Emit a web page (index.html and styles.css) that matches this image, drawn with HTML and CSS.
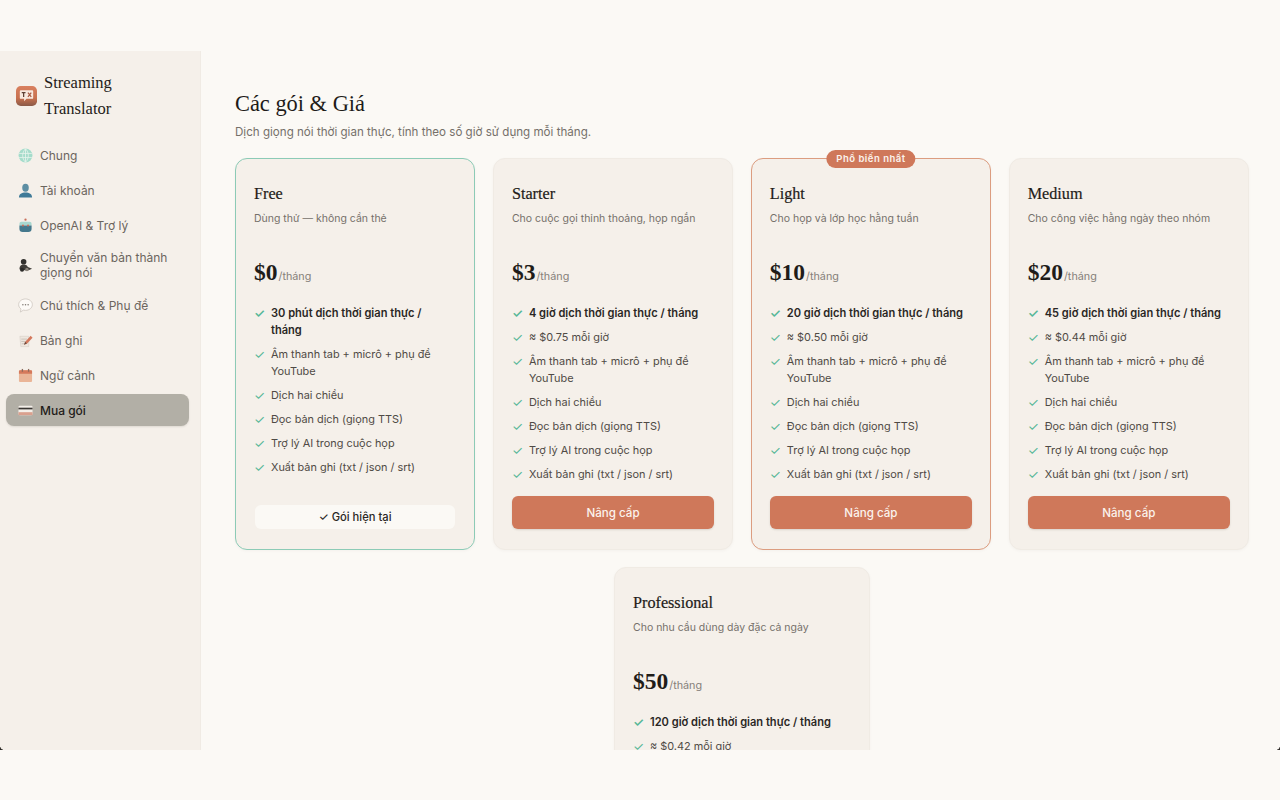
FILE: index.html
```html
<!DOCTYPE html>
<html lang="vi">
<head>
<meta charset="UTF-8" />
<title>Streaming Translator - Các gói & Giá</title>
<link rel="stylesheet" href="styles.css">
</head>
<body>
  <div class="app">
    <aside class="sidebar">
      <div class="brand">
        <svg class="brand-logo" viewBox="0 0 22 22" aria-hidden="true">
          <defs>
            <linearGradient id="logoBg" x1="0" y1="0" x2="0" y2="1">
              <stop offset="0" stop-color="#d9805f" />
              <stop offset="0.6" stop-color="#c8714f" />
              <stop offset="1" stop-color="#8a5a48" />
            </linearGradient>
          </defs>
          <rect width="22" height="21" y="0.5" rx="5" fill="url(#logoBg)" />
          <path d="M5 5h12a1 1 0 0 1 1 1v7a1 1 0 0 1-1 1h-6l-2.500 2.500V14H5a1 1 0 0 1-1-1V6a1 1 0 0 1 1-1z" fill="#f8e9df" />
          <path d="M6 7.500h4M8 7.500v4.500" stroke="#5d4034" stroke-width="1.300" fill="none" />
          <path d="M12.500 7.500l3.500 4.500M16 7.500l-3.500 4.500" stroke="#a85a43" stroke-width="1.300" fill="none" />
        </svg>
        <div class="brand-name">Streaming Translator</div>
      </div>
      <nav class="nav">
        <a class="nav-item">
          <svg class="nav-icon" viewBox="0 0 16 16"><circle cx="8" cy="8" r="7.400" fill="#a5dccb" /><path d="M1.200 5.800h13.600M1.200 10.200h13.600M8 .8v14.400M8 .8c-4 4-4 10.400 0 14.400M8 .8c4 4 4 10.400 0 14.400" stroke="#e6f3ec" stroke-width="0.900" fill="none" /></svg>
          <span>Chung</span>
        </a>
        <a class="nav-item">
          <svg class="nav-icon" viewBox="0 0 16 16"><ellipse cx="8" cy="5" rx="3.500" ry="4.200" fill="#5d8ea3" /><path d="M1 15.500c0-3.800 3-5.300 7-5.300s7 1.500 7 5.300z" fill="#3f7a98" /></svg>
          <span>Tài khoản</span>
        </a>
        <a class="nav-item">
          <svg class="nav-icon" viewBox="0 0 16 16"><circle cx="8" cy="1.800" r="1.200" fill="#c96f5a" /><path d="M3.500 4h9A2 2 0 0 1 14.500 6v2h-13V6a2 2 0 0 1 2-2z" fill="#a9d8d0" /><path d="M1.500 8h13v3.500a3.500 3.500 0 0 1-3.500 3.500H5a3.500 3.500 0 0 1-3.500-3.500z" fill="#44788c" /><circle cx="5.300" cy="8" r="1.100" fill="#c96f5a" /><circle cx="10.700" cy="8" r="1.100" fill="#c96f5a" /></svg>
          <span>OpenAI &amp; Trợ lý</span>
        </a>
        <a class="nav-item">
          <svg class="nav-icon" viewBox="0 0 16 16"><circle cx="6" cy="4" r="3" fill="#33312e" /><path d="M1.500 12c0-3.500 2-5 4.500-5 2 0 3.500.8 4.500 2.500L15 11.500l-5 2z" fill="#3f3c38" /><circle cx="4.300" cy="12.500" r="2.200" fill="#2b2a28" /><circle cx="9.500" cy="12.300" r="1.800" fill="#8c857c" /></svg>
          <span>Chuyển văn bản thành giọng nói</span>
        </a>
        <a class="nav-item">
          <svg class="nav-icon" viewBox="0 0 16 16"><path d="M8 1c4 0 7.300 2.600 7.300 6.100S12 13.200 8 13.200c-.8 0-1.500-.1-2.200-.3L2.500 15l.7-3.300C1.600 10.600.7 9 .7 7.100.7 3.600 4 1 8 1z" fill="#fdfbf8" stroke="#cfc9c1" stroke-width="0.900" /><circle cx="5.200" cy="7.200" r="0.800" fill="#7d7871" /><circle cx="8" cy="7.200" r="0.800" fill="#7d7871" /><circle cx="10.800" cy="7.200" r="0.800" fill="#7d7871" /></svg>
          <span>Chú thích &amp; Phụ đề</span>
        </a>
        <a class="nav-item">
          <svg class="nav-icon" viewBox="0 0 16 16"><path d="M2 3.500h9.500v11H3z" fill="#eee7df" stroke="#cfc8bf" stroke-width="0.500" /><path d="M3.500 6.500h6M3.500 9h5M4 11.500h3" stroke="#b9b1a8" stroke-width="0.700" /><path d="M6.500 12.500l1-3 6-6.500 2 2-6 6.500z" fill="#d4785c" /><path d="M6.500 12.500l1-3 2 1.500z" fill="#5a4a42" /></svg>
          <span>Bản ghi</span>
        </a>
        <a class="nav-item">
          <svg class="nav-icon" viewBox="0 0 16 16"><rect x="1" y="2.500" width="14" height="12.500" rx="1.200" fill="#eab597" /><path d="M2.200 2.500h11.600A1.200 1.200 0 0 1 15 3.700V6H1V3.700a1.200 1.200 0 0 1 1.200-1.200z" fill="#d5795b" /><rect x="4" y="1" width="1.400" height="3" fill="#8d6a5c" /><rect x="10.600" y="1" width="1.400" height="3" fill="#8d6a5c" /></svg>
          <span>Ngữ cảnh</span>
        </a>
        <a class="nav-item active">
          <svg class="nav-icon" viewBox="0 0 16 16"><rect x="0.500" y="3" width="15" height="10" rx="1.200" fill="#f4efe9" /><rect x="0.500" y="5" width="15" height="1.800" fill="#3a3733" /><rect x="0.500" y="9.800" width="15" height="3.200" fill="#d9a08e" /></svg>
          <span>Mua gói</span>
        </a>
      </nav>
    </aside>

    <main class="main">
      <h1 class="page-title">Các gói &amp; Giá</h1>
      <p class="page-sub">Dịch giọng nói thời gian thực, tính theo số giờ sử dụng mỗi tháng.</p>

      <div class="plans">
        <section class="plan current">
          <h2 class="plan-name">Free</h2>
          <p class="plan-desc">Dùng thử — không cần thẻ</p>
          <div class="plan-price"><b>$0</b><span>/tháng</span></div>
          <ul class="features">
            <li class="strong">30 phút dịch thời gian thực / tháng</li>
            <li>Âm thanh tab + micrô + phụ đề YouTube</li>
            <li>Dịch hai chiều</li>
            <li>Đọc bản dịch (giọng TTS)</li>
            <li>Trợ lý AI trong cuộc họp</li>
            <li>Xuất bản ghi (txt / json / srt)</li>
          </ul>
          <button type="button" class="btn btn-current">✓ Gói hiện tại</button>
        </section>

        <section class="plan">
          <h2 class="plan-name">Starter</h2>
          <p class="plan-desc">Cho cuộc gọi thỉnh thoảng, họp ngắn</p>
          <div class="plan-price"><b>$3</b><span>/tháng</span></div>
          <ul class="features">
            <li class="strong">4 giờ dịch thời gian thực / tháng</li>
            <li>≈ $0.75 mỗi giờ</li>
            <li>Âm thanh tab + micrô + phụ đề YouTube</li>
            <li>Dịch hai chiều</li>
            <li>Đọc bản dịch (giọng TTS)</li>
            <li>Trợ lý AI trong cuộc họp</li>
            <li>Xuất bản ghi (txt / json / srt)</li>
          </ul>
          <button type="button" class="btn">Nâng cấp</button>
        </section>

        <section class="plan popular">
          <span class="badge">Phổ biến nhất</span>
          <h2 class="plan-name">Light</h2>
          <p class="plan-desc">Cho họp và lớp học hằng tuần</p>
          <div class="plan-price"><b>$10</b><span>/tháng</span></div>
          <ul class="features">
            <li class="strong">20 giờ dịch thời gian thực / tháng</li>
            <li>≈ $0.50 mỗi giờ</li>
            <li>Âm thanh tab + micrô + phụ đề YouTube</li>
            <li>Dịch hai chiều</li>
            <li>Đọc bản dịch (giọng TTS)</li>
            <li>Trợ lý AI trong cuộc họp</li>
            <li>Xuất bản ghi (txt / json / srt)</li>
          </ul>
          <button type="button" class="btn">Nâng cấp</button>
        </section>

        <section class="plan">
          <h2 class="plan-name">Medium</h2>
          <p class="plan-desc">Cho công việc hằng ngày theo nhóm</p>
          <div class="plan-price"><b>$20</b><span>/tháng</span></div>
          <ul class="features">
            <li class="strong">45 giờ dịch thời gian thực / tháng</li>
            <li>≈ $0.44 mỗi giờ</li>
            <li>Âm thanh tab + micrô + phụ đề YouTube</li>
            <li>Dịch hai chiều</li>
            <li>Đọc bản dịch (giọng TTS)</li>
            <li>Trợ lý AI trong cuộc họp</li>
            <li>Xuất bản ghi (txt / json / srt)</li>
          </ul>
          <button type="button" class="btn">Nâng cấp</button>
        </section>

        <section class="plan">
          <h2 class="plan-name">Professional</h2>
          <p class="plan-desc">Cho nhu cầu dùng dày đặc cả ngày</p>
          <div class="plan-price"><b>$50</b><span>/tháng</span></div>
          <ul class="features">
            <li class="strong">120 giờ dịch thời gian thực / tháng</li>
            <li>≈ $0.42 mỗi giờ</li>
          </ul>
        </section>
      </div>
    </main>
  </div>
</body>
</html>
```

FILE: styles.css
```css
/* Base */
* {
  box-sizing: border-box;
}
html, body {
  height: 100%;
}
body {
  margin: 0;
  padding: 51px 0 50px;
  background: #fbf9f5;
  color: #2a2724;
  font-family: Inter, 'Liberation Sans', sans-serif;
  overflow: hidden;
}
.app {
  position: relative;
  display: flex;
  height: 699px;
  overflow: hidden;
}
/* window corners showing at the bottom edge */
.app::before,
.app::after {
  content: "";
  position: absolute;
  bottom: 0;
  width: 3px;
  height: 3px;
  z-index: 1;
}
.app::before {
  left: 0;
  background: radial-gradient(circle at 100% 0, transparent 2px, #2a2724 3px);
}
.app::after {
  right: 0;
  background: radial-gradient(circle at 0 0, transparent 2px, #2a2724 3px);
}

/* Sidebar */
.sidebar {
  flex: 0 0 201px;
  background: #f5f0ea;
  border-right: 1px solid #f0ebe4;
  padding: 19px 11px 0 6px;
}
.brand {
  display: flex;
  align-items: center;
  gap: 7px;
  padding-left: 10px;
  margin-bottom: 17px;
}
.brand-logo {
  width: 21px;
  height: 22px;
  flex: none;
}
.brand-name {
  width: 90px;
  font-family: 'Liberation Serif', serif;
  font-size: 16.500px;
  line-height: 26px;
  color: #1f1c19;
}
.nav {
  display: flex;
  flex-direction: column;
  gap: 3px;
}
.nav-item {
  display: flex;
  align-items: center;
  gap: 7px;
  min-height: 32px;
  padding: 6px 10px 6px 12px;
  border-radius: 8px;
  font-size: 12px;
  line-height: 15px;
  color: #6b655e;
}
.nav-item.active {
  background: #b2afa6;
  color: #1f1c19;
  font-weight: 500;
  box-shadow: 0 1px 2px rgba(60, 50, 40, 0.12);
}
.nav-icon {
  width: 15px;
  height: 15px;
  flex: none;
}

/* Main */
.main {
  flex: 1;
  min-width: 0;
  padding: 37px 31px 0 34px;
}
.page-title {
  margin: 0;
  font-family: 'Liberation Serif', serif;
  font-size: 22.400px;
  font-weight: 400;
  line-height: 32px;
  color: #1f1c19;
}
.page-sub {
  margin: 3px 0 17px;
  font-size: 11.600px;
  line-height: 18px;
  color: #75706a;
}

/* Plans */
.plans {
  display: flex;
  flex-wrap: wrap;
  justify-content: center;
  gap: 17px 17.600px;
}
.plan {
  position: relative;
  display: flex;
  flex-direction: column;
  flex: 1 1 240px;
  max-width: 256px;
  min-height: 391px;
  padding: 24px 18px 20px 18px;
  background: #f5f0ea;
  border: 1px solid #f0ebe4;
  border-radius: 12px;
  box-shadow: 0 1px 3px rgba(70, 55, 40, 0.04);
}
.plan.current {
  border-color: #8ccbb6;
}
.plan.popular {
  border-color: #dc9d80;
}
.badge {
  position: absolute;
  top: -9px;
  left: 50%;
  transform: translateX(-50%);
  padding: 0 10px;
  height: 18px;
  line-height: 18px;
  border-radius: 9px;
  background: #cf785a;
  color: #fbf3ed;
  font-size: 9.500px;
  font-weight: 600;
  letter-spacing: 0.5px;
  white-space: nowrap;
}
.plan-name {
  margin: 0;
  font-family: 'Liberation Serif', serif;
  font-size: 16.200px;
  font-weight: 400;
  line-height: 22px;
  color: #1f1c19;
  -webkit-text-stroke: 0.2px #1f1c19;
}
.plan-desc {
  margin: 6px 0 0;
  min-height: 41px;
  font-size: 10.500px;
  line-height: 16px;
  color: #75706a;
}
.plan-price {
  display: flex;
  align-items: baseline;
  gap: 1px;
  margin-top: 2px;
  height: 36px;
}
.plan-price b {
  font-family: 'Liberation Serif', serif;
  font-size: 23.500px;
  font-weight: 700;
  line-height: 36px;
  color: #1f1c19;
}
.plan-price span {
  font-size: 10.800px;
  color: #85807a;
}
.features {
  list-style: none;
  margin: 15px 0 13px;
  padding: 0 5px 0 0;
  display: flex;
  flex-direction: column;
  gap: 7px;
}
.features li {
  position: relative;
  padding-left: 17px;
  font-size: 10.900px;
  line-height: 17px;
  color: #4f4a45;
}
.features li::before {
  content: "✓";
  position: absolute;
  left: 0;
  top: 0;
  color: #55b797;
  font-size: 12.500px;
}
.features li.strong {
  font-size: 11.100px;
  font-weight: 600;
  color: #2a2724;
}
.btn {
  margin-top: auto;
  height: 33px;
  border: none;
  border-radius: 6px;
  background: #cf785a;
  color: #fbf3ed;
  font-family: inherit;
  font-size: 11.600px;
  font-weight: 500;
  box-shadow: 0 1px 2px rgba(70, 55, 40, 0.15);
  cursor: pointer;
}
.btn-current {
  height: 24px;
  margin-left: 1px;
  margin-right: 1px;
  background: #fbf9f5;
  color: #2a2724;
  font-size: 11.200px;
  box-shadow: none;
}
```
